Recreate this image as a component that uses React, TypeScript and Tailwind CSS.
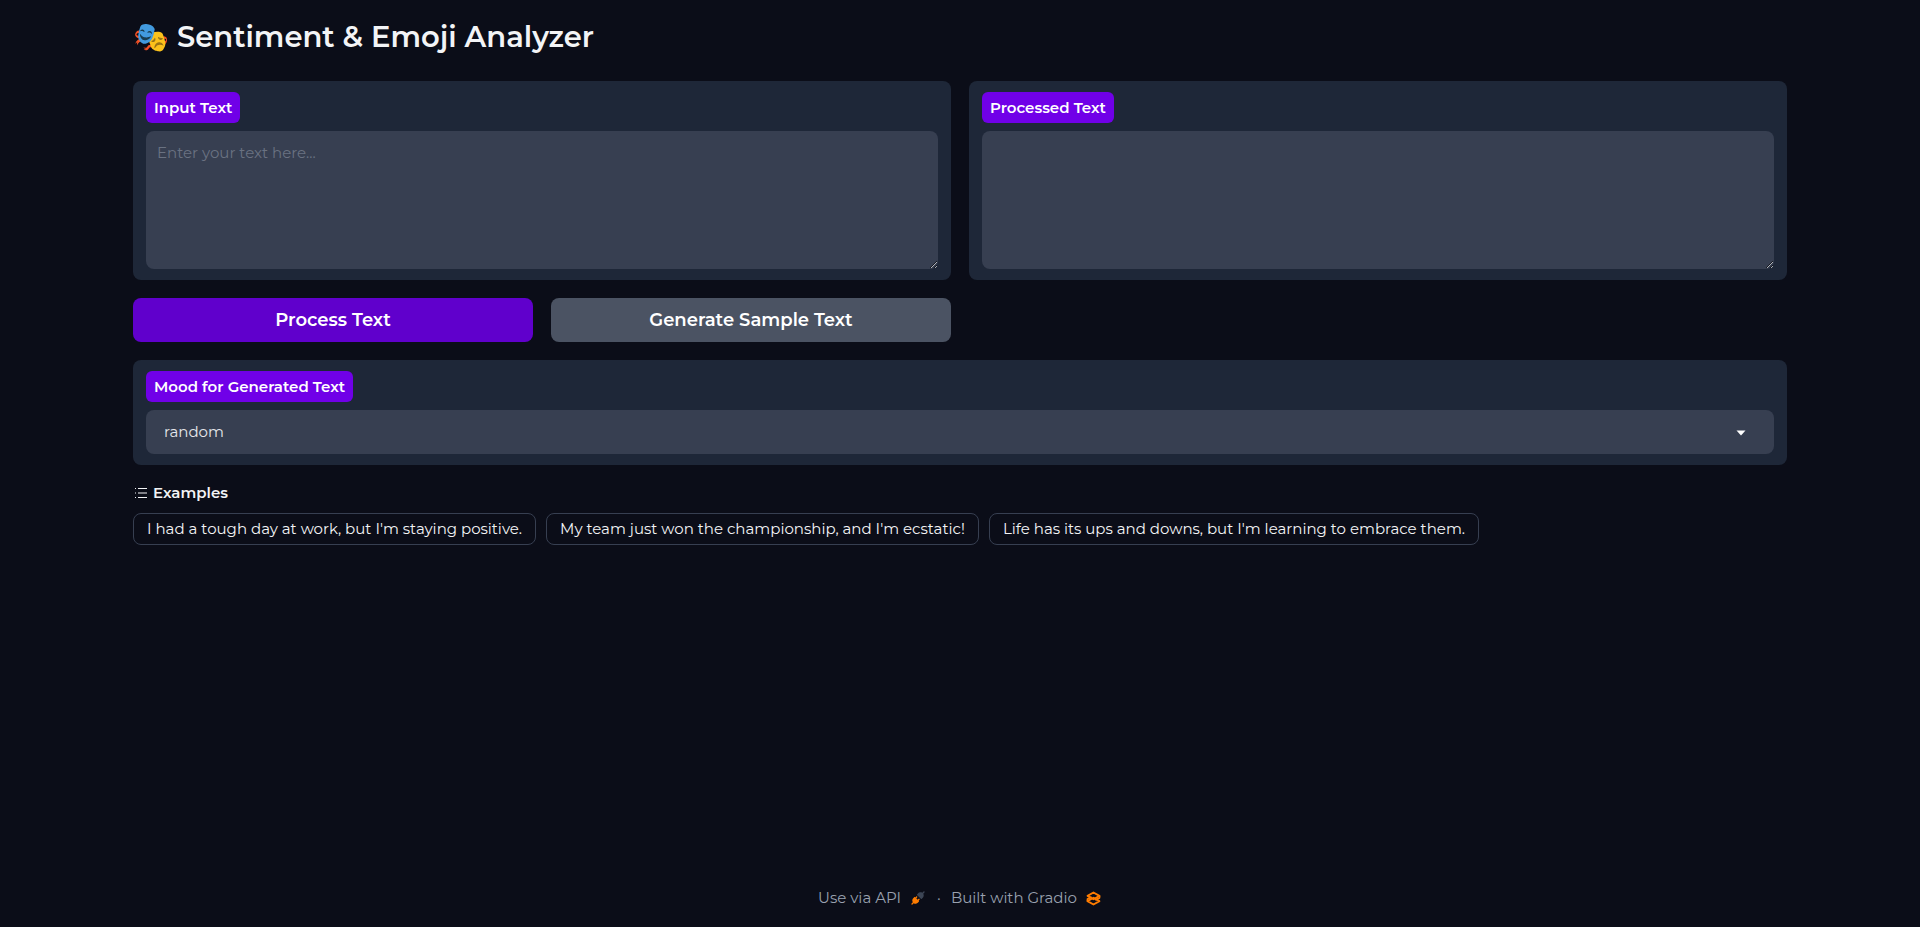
import type { ReactNode } from "react";
import { useState } from "react";

const EXAMPLES = [
  "I had a tough day at work, but I'm staying positive.",
  "My team just won the championship, and I'm ecstatic!",
  "Life has its ups and downs, but I'm learning to embrace them.",
];

const MOODS = ["random", "happy", "sad", "neutral"];

function FieldLabel({ id, children }: { id: string; children: ReactNode }) {
  return (
    <label
      htmlFor={id}
      className="self-start rounded-md bg-[#7000e8] px-2 py-1 text-[15px] leading-[23px] font-semibold text-white"
    >
      {children}
    </label>
  );
}

function Card({ children }: { children: ReactNode }) {
  return <div className="flex min-w-0 flex-col gap-2 rounded-lg bg-[#1e2738] px-[13px] py-[11px]">{children}</div>;
}

function ListIcon() {
  return (
    <svg viewBox="0 0 32 32" className="size-4" fill="currentColor" aria-hidden="true">
      <path d="M10 6h18v2H10zm0 18h18v2H10zm0-9h18v2H10zm-6 0h2v2H4zm0-9h2v2H4zm0 18h2v2H4z" />
    </svg>
  );
}

function RocketIcon() {
  return (
    <svg viewBox="0 0 28 28" className="size-[14px]" fill="none" aria-hidden="true">
      <path
        d="M26.9425 2.94265C27.4632 2.42195 27.4632 1.57773 26.9425 1.05703C26.4218 0.536329 25.5776 0.536329 25.0569 1.05703L22.5713 3.54256C21.1213 2.59333 19.5367 2.43378 18.1753 2.64006C16.5495 2.88638 15.1127 3.66838 14.3905 4.39053L12.3905 6.39053C12.1405 6.64058 12 6.97972 12 7.33334C12 7.68697 12.1405 8.0261 12.3905 8.27615L19.7239 15.6095C20.2446 16.1302 21.0888 16.1302 21.6095 15.6095L23.6095 13.6095C24.3316 12.8873 25.1136 11.4505 25.36 9.82475C25.5663 8.46312 25.4066 6.87827 24.4571 5.42807L26.9425 2.94265Z"
        fill="#3c4555"
      />
      <path
        d="M12.276 12.9426C12.7967 12.4219 12.7967 11.5777 12.276 11.057C11.7553 10.5363 10.9111 10.5363 10.3904 11.057L8.66651 12.7809L8.27615 12.3905C8.0261 12.1405 7.68697 12 7.33334 12C6.97972 12 6.64058 12.1405 6.39053 12.3905L4.39053 14.3905C3.66838 15.1127 2.88638 16.5495 2.64006 18.1753C2.43377 19.5367 2.59333 21.1214 3.54262 22.5714L1.05703 25.057C0.536329 25.5777 0.536329 26.4219 1.05703 26.9426C1.57773 27.4633 2.42195 27.4633 2.94265 26.9426L5.42817 24.4571C6.87835 25.4066 8.46315 25.5663 9.82475 25.36C11.4505 25.1136 12.8873 24.3316 13.6095 23.6095L15.6095 21.6095C15.8595 21.3594 16 21.0203 16 20.6667C16 20.313 15.8595 19.9739 15.6095 19.7239L15.2192 19.3335L16.943 17.6096C17.4637 17.0889 17.4637 16.2447 16.943 15.724C16.4223 15.2033 15.5781 15.2033 15.0574 15.724L13.3335 17.4479L10.5521 14.6665L12.276 12.9426Z"
        fill="#ff7c00"
      />
    </svg>
  );
}

function GradioIcon() {
  return (
    <svg viewBox="0 0 576 576" className="size-[17px]" fill="none" stroke="#ff7c00" strokeWidth="62" strokeLinejoin="round" strokeLinecap="round" aria-hidden="true">
      <path d="M287.5 260L86 376L287.5 492L489 376L287.5 260Z" />
      <path d="M287.5 84L86 200L287.5 316L489 200L287.5 84Z" />
      <path d="M86 376V310L200 245" />
      <path d="M489 200V266L375 331" />
    </svg>
  );
}

export default function App() {
  const [text, setText] = useState("");
  const [mood, setMood] = useState("random");

  return (
    <div className="flex min-h-screen flex-col bg-[#0b0d18] px-4 font-[Montserrat,Inter,sans-serif] text-gray-100">
      <main className="mx-auto flex w-full max-w-[1654px] grow flex-col gap-[18px] pt-[18px]">
        <h1 className="mb-[7px] text-[29px] leading-[38px] font-semibold">🎭 Sentiment &amp; Emoji Analyzer</h1>

        <div className="grid grid-cols-2 gap-[18px]">
          <Card>
            <FieldLabel id="input-text">Input Text</FieldLabel>
            <textarea
              id="input-text"
              rows={5}
              value={text}
              onChange={(e) => setText(e.target.value)}
              placeholder="Enter your text here..."
              className="block h-[138px] w-full resize rounded-lg bg-[#373f51] px-[11px] py-2.5 text-[15px] leading-6 text-gray-100 placeholder:text-gray-500"
            />
          </Card>
          <Card>
            <FieldLabel id="processed-text">Processed Text</FieldLabel>
            <textarea
              id="processed-text"
              rows={5}
              readOnly
              className="block h-[138px] w-full resize rounded-lg bg-[#373f51] px-[11px] py-2.5 text-[15px] leading-6 text-gray-100"
            />
          </Card>
        </div>

        <div className="grid grid-cols-4 gap-[18px]">
          <button type="button" className="h-11 rounded-lg bg-[#6000cc] text-lg font-semibold text-white">
            Process Text
          </button>
          <button type="button" className="h-11 rounded-lg bg-[#4b5363] text-lg font-semibold text-white">
            Generate Sample Text
          </button>
        </div>

        <Card>
          <FieldLabel id="mood">Mood for Generated Text</FieldLabel>
          <div className="grid items-center">
            <select
              id="mood"
              value={mood}
              onChange={(e) => setMood(e.target.value)}
              className="col-start-1 row-start-1 h-11 w-full appearance-none rounded-lg bg-[#373f51] px-[18px] text-[15px] text-gray-200"
            >
              {MOODS.map((m) => (
                <option key={m}>{m}</option>
              ))}
            </select>
            <svg viewBox="0 0 18 18" className="pointer-events-none col-start-1 row-start-1 mr-6 size-[18px] justify-self-end fill-white" aria-hidden="true">
              <path d="M4.5 7.5h9L9 12.5z" />
            </svg>
          </div>
        </Card>

        <section className="flex flex-col gap-2.5">
          <h2 className="flex items-center gap-1 text-[15px] leading-5 font-semibold">
            <ListIcon />
            Examples
          </h2>
          <div className="flex flex-wrap gap-2.5">
            {EXAMPLES.map((example) => (
              <button
                key={example}
                type="button"
                onClick={() => setText(example)}
                className="rounded-lg border border-[#373f51] px-[13px] py-[3px] text-[15px] leading-6"
              >
                {example}
              </button>
            ))}
          </div>
        </section>
      </main>

      <footer className="flex items-center justify-center pb-[17px] text-[15px] leading-6 text-gray-400">
        <a href="#api" className="flex items-center gap-2.5">
          Use via API
          <RocketIcon />
        </a>
        <span className="mr-2.5 ml-3">·</span>
        <a href="#gradio" className="flex items-center gap-2">
          Built with Gradio
          <GradioIcon />
        </a>
      </footer>
    </div>
  );
}
